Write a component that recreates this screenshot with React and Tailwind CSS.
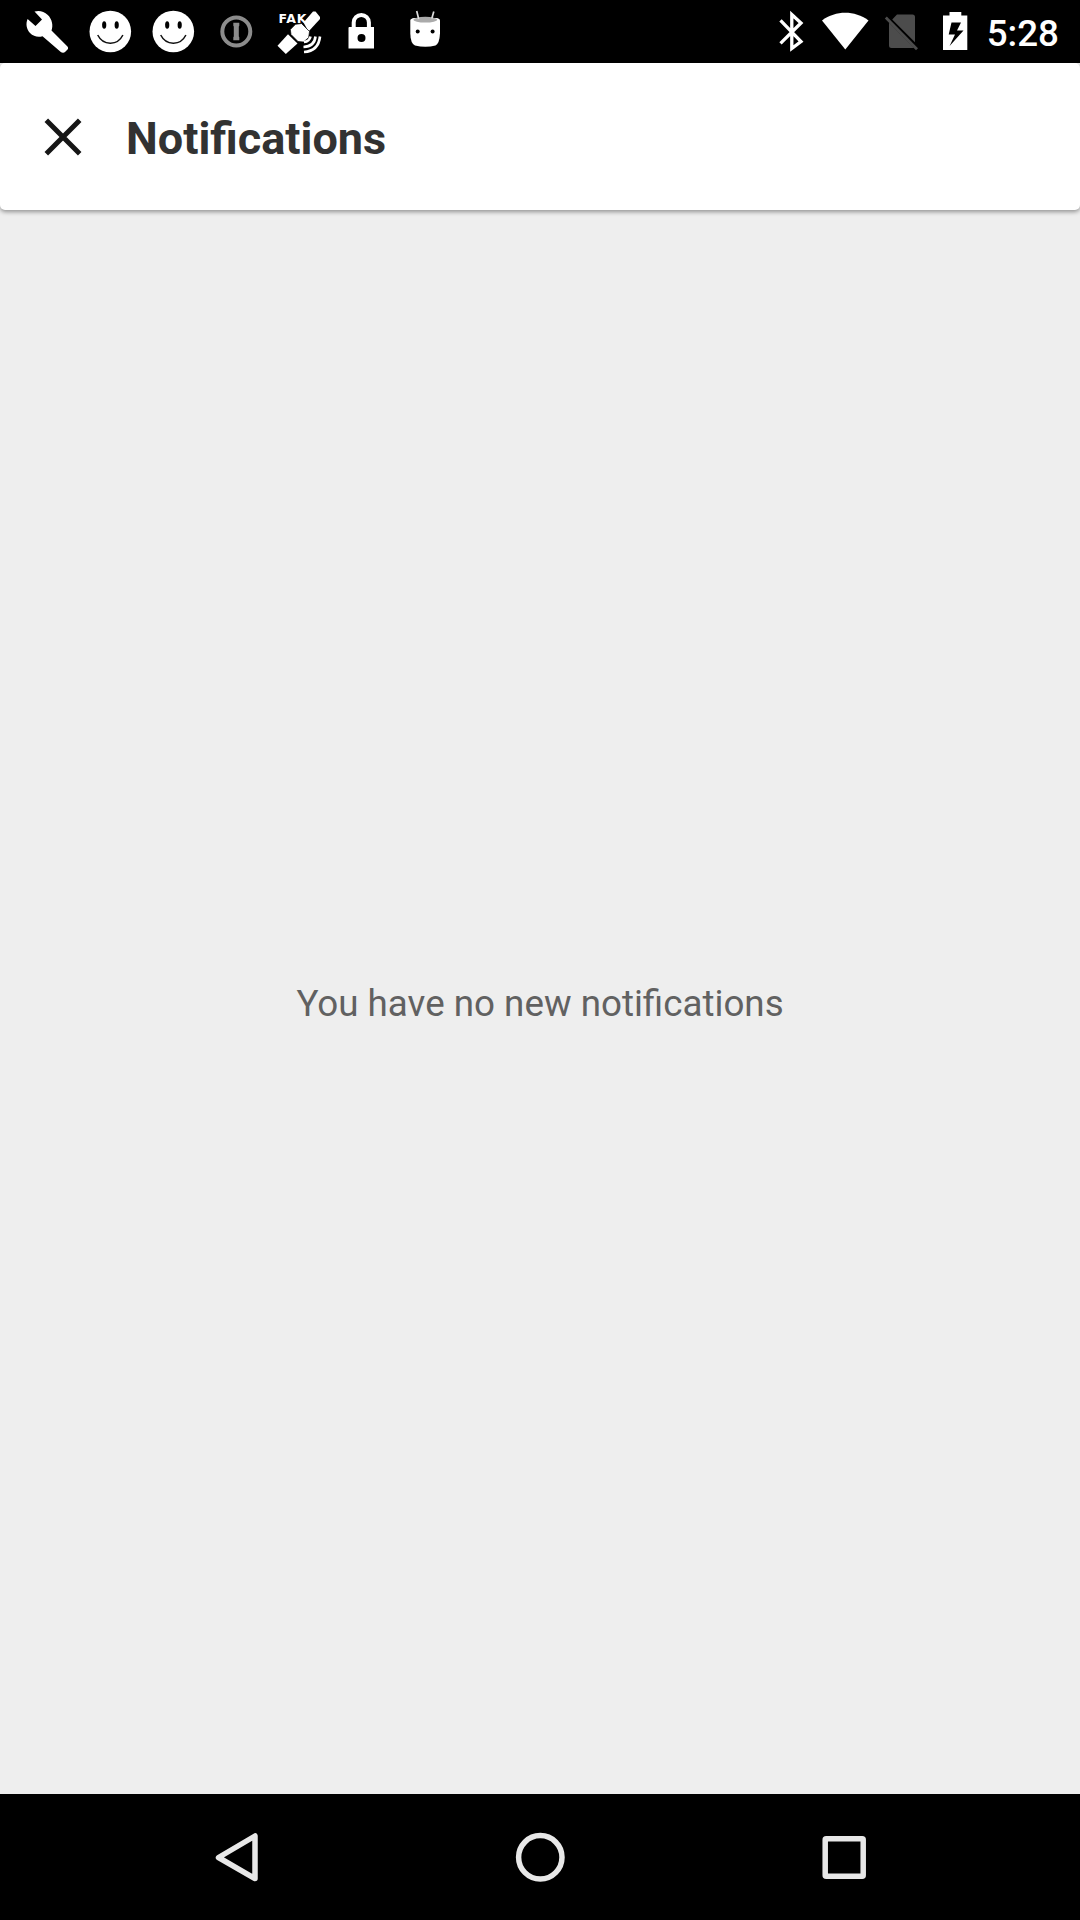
function Slot({ x, w = 63, children }) {
  return (
    <svg className="h-[63px] shrink-0" width={w} height="63" viewBox={`${x} 0 ${w} 63`} fill="#fff">
      {children}
    </svg>
  );
}

function Smiley({ x }) {
  return (
    <Slot x={x}>
      <circle cx={x + 31.3} cy="31.5" r="20.8" />
      <ellipse cx={x + 25.2} cy="25" rx="2.1" ry="3.8" fill="#000" />
      <ellipse cx={x + 37.7} cy="25" rx="2.1" ry="3.8" fill="#000" />
      <path d={`M${x + 18.700} 35q4 8 12.5 8.2t12.7-8.2`} fill="none" stroke="#111" strokeWidth="1.5" />
    </Slot>
  );
}

function StatusBar() {
  return (
    <div className="flex h-[63px] items-center bg-black pl-[16px]">
      <Slot x={16}>
        <path d="M67.200 46.200 51.500 30.500C53.500 25.500 52 19 47.800 15 43.800 11.2 39 10.2 34.500 11.6L42 19.500 35.5 26 27.600 19C25.6 23.7 26.3 29 30 33 33.500 36.500 38 37.500 42.500 36.200L60.500 51.700C62 53 64 53 65.300 51.800L67.500 49.6C68.400 48.7 68.300 47.2 67.200 46.200Z" />
      </Slot>
      <Smiley x={79} />
      <Smiley x={142} />
      <Slot x={205}>
        <circle cx="236.3" cy="31.5" r="14" fill="none" stroke="#8c8c8c" strokeWidth="4" />
        <path d="M233.3 22.7h6v3l-.5.8v10l.5.8v3h-6v-3l.5-.8v-10l-.5-.8z" fill="#8c8c8c" />
      </Slot>
      <Slot x={268}>
        <text x="278.5" y="22.8" fontSize="12.5" letterSpacing="0.7" className="font-['DejaVu_Sans'] font-bold">FAK</text>
        <path d="M303.500 22.500 313 11.500h2.500L320 17v2L308.500 31.500Z" />
        <path d="M277.500 45.800 288 34.200 297.500 43.500 285.800 54Z" />
        <path d="M290.300 29.500 295.500 24.300 301.500 23.500 309.500 31.500 308.700 37.500 303.500 42 298 41.500 291 34.500Z" stroke="#000" strokeWidth="0.700" />
        <path d="M304 42q5.500-.5 6.500-5.500M303.500 47q11-.5 12-10.500M304 52q14.500-1 16-15.500" fill="none" stroke="#fff" strokeWidth="2.600" />
      </Slot>
      <Slot x={331}>
        <path d="M353.700 29V22.500a7.600 7.600 0 0 1 15.200 0V29" fill="none" stroke="#fff" strokeWidth="4" />
        <path fillRule="evenodd" d="M349 27h25v21.500h-25.500v-20.700zM361.500 34a4 4 0 1 0 0 8 4 4 0 0 0 0-8z" />
      </Slot>
      <Slot x={394}>
        <path d="M410.300 20.500q0-2 4-2.500h22q3.700.5 3.700 2.500v13q-.5 10-4.500 12-10 2.500-20.500 0-4.500-2-4.700-12z" />
        <ellipse cx="425.300" cy="19.700" rx="12" ry="2.900" fill="#aaa" />
        <path d="M416.700 11l2 8M433.800 11.500l-2 7" stroke="#ddd" strokeWidth="1.700" />
        <circle cx="417.700" cy="31.500" r="2" fill="#000" />
        <circle cx="432.600" cy="31.500" r="2" fill="#000" />
      </Slot>

      <div className="mr-[21px] ml-auto flex items-center">
        <Slot x={770} w={40}>
          <path d="M780.500 20.300 801 41.500 791.800 48.500V14.500L801 23 780.500 43.300" fill="none" stroke="#fff" strokeWidth="3.300" />
        </Slot>
        <Slot x={810} w={68}>
          <path d="M845.300 49.500 822 20.500C836 10.300 854.500 10.300 868.500 20.500Z" />
        </Slot>
        <Slot x={878} w={52}>
          <path d="M897 14.500h15.500q2.500 0 2.500 2.500v25.300L892.200 19.400zM889 22.500 914 47.700l-1.500.3h-21q-2.500 0-2.500-2.500z" fill="#4c4c4c" />
          <path d="M885.800 17.500 917 49.200" stroke="#4c4c4c" strokeWidth="2.800" />
        </Slot>
        <Slot x={930} w={57}>
          <path fillRule="evenodd" d="M949.500 12h11.800v3.500h6V50h-24.300V15.500h6.500zM951.500 22.500 948.700 34.500H955L949.600 46 963.500 30.500H957L961 22.500z" />
        </Slot>
        <span className="pt-[4px] font-['Roboto'] text-[36.75px] leading-[59px] font-medium whitespace-nowrap text-white">5:28</span>
      </div>
    </div>
  );
}

export default function App() {
  return (
    <div className="flex h-[1920px] w-[1080px] flex-col bg-[#eeeeee] font-['Roboto',sans-serif]">
      <StatusBar />
      <header className="flex h-[147px] shrink-0 items-center rounded-[5px] bg-white pl-[42px] shadow-[0_2px_4px_rgba(0,0,0,0.38)]">
        <svg width="42" height="42" viewBox="0 0 42 42" className="shrink-0" fill="none" stroke="#161616" strokeWidth="5">
          <path d="M4.300 4.300 37.700 37.700M37.700 4.300 4.300 37.700" />
        </svg>
        <h1 className="ml-[42px] pt-[5px] text-[45px] leading-[60px] font-bold text-[#323232]">Notifications</h1>
      </header>
      <main className="flex flex-1 items-center justify-center pt-[4px]">
        <p className="text-[36.75px] leading-[44px] text-[#616161]">You have no new notifications</p>
      </main>
      <nav className="flex h-[126px] items-center justify-center bg-black">
        <svg width="304" height="126" viewBox="84 0 304 126" fill="none" stroke="#e8e8e8" strokeWidth="5.500" strokeLinejoin="round">
          <path d="M218.500 63.500 255 42V84.500Z" />
        </svg>
        <svg width="304" height="126" viewBox="388 0 304 126" fill="none" stroke="#e8e8e8" strokeWidth="5.500">
          <circle cx="540.300" cy="63.300" r="21.700" />
        </svg>
        <svg width="304" height="126" viewBox="692 0 304 126" fill="none" stroke="#e8e8e8" strokeWidth="5.500" strokeLinejoin="round">
          <rect x="825.200" y="44.700" width="38" height="37.500" rx="1" />
        </svg>
      </nav>
    </div>
  );
}
